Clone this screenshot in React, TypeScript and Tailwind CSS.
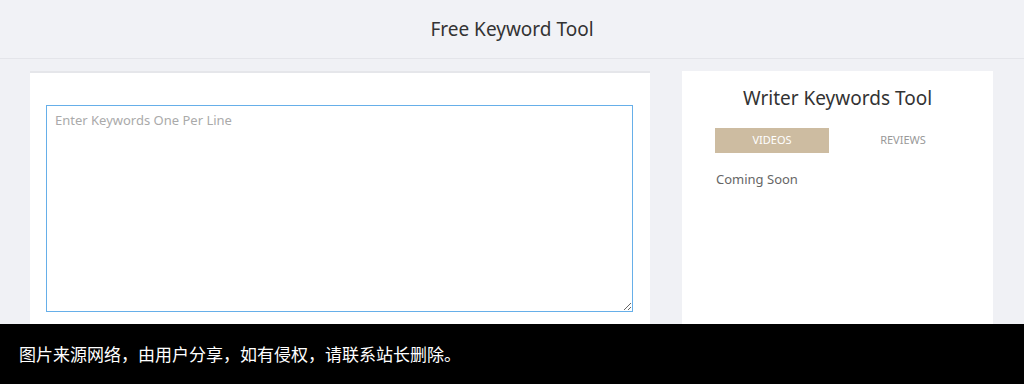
export default function App() {
  return (
    <div
      className="relative w-[1024px] h-[384px] overflow-hidden bg-[#f0f1f5]"
      style={{ fontFamily: '"Noto Sans", "Open Sans", sans-serif' }}
    >
      <header className="h-[59px] flex items-center justify-center border-b border-[#e4e5ea] bg-[#f1f2f6]">
        <h1 className="text-[19px] text-[#333]">Free Keyword Tool</h1>
      </header>

      <div className="flex gap-[32px] pl-[30px] pt-[12px]">
        <div className="w-[620px] h-[300px] bg-white border-t-2 border-[#e5e6ea] px-[16px] pt-[32px]">
          <textarea
            className="w-[587px] h-[207px] border border-[#66afe9] outline-none px-[8px] py-[5px] text-[13px] text-[#555] placeholder:text-[#aaa] resize-y"
            placeholder="Enter Keywords One Per Line"
          />
        </div>

        <div className="w-[311px] h-[300px] bg-white pt-[14px]">
          <h2 className="text-center text-[19px] text-[#333] leading-[26px]">
            Writer Keywords Tool
          </h2>
          <div className="flex mt-[17px] pl-[33px]">
            <button className="shrink-0 w-[114px] h-[25px] bg-[#cdbca1] text-white text-[11px]">
              VIDEOS
            </button>
            <button className="shrink-0 w-[148px] h-[25px] text-[#999] text-[11px]">
              REVIEWS
            </button>
          </div>
          <p className="mt-[17px] pl-[34px] text-[13px] text-[#666]">Coming Soon</p>
        </div>
      </div>

      <div
        className="absolute left-0 right-0 bottom-0 h-[60px] bg-black flex items-center pl-[19px] text-white text-[17px]"
        style={{ fontFamily: '"Noto Sans CJK SC", sans-serif' }}
      >
        图片来源网络，由用户分享，如有侵权，请联系站长删除。
      </div>
    </div>
  );
}
